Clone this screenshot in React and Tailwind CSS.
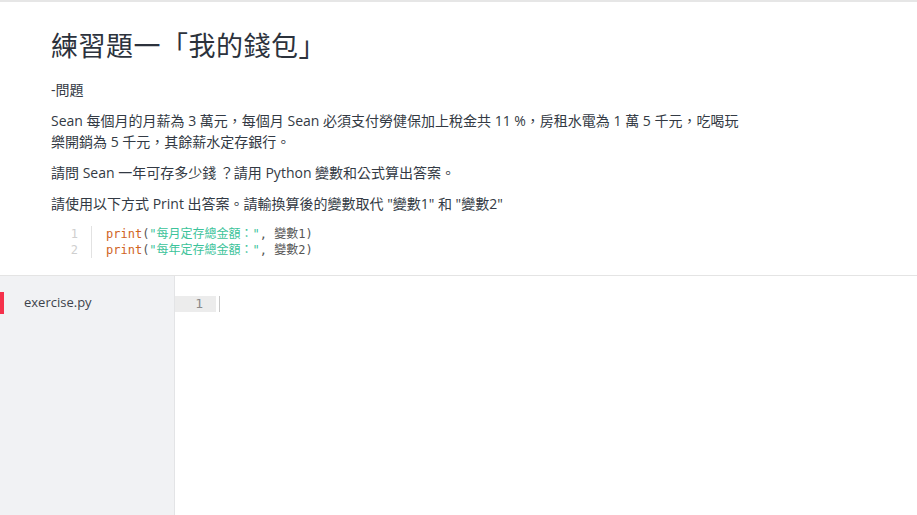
import React from 'react';

const codeLines = [
  ['每月定存總金額：', '變數1'],
  ['每年定存總金額：', '變數2'],
];

const App = () => {
  return (
    <div className="w-[917px] h-[515px] flex flex-col bg-white text-[#333a44] overflow-hidden font-['Open_Sans','Noto_Sans_CJK_TC',sans-serif]">
      {/* Problem description */}
      <div className="border-t-2 border-[#e6e6e6] border-b border-b-[#e4e4e4] pl-[51px] pr-6 pt-[25px] pb-[17px]">
        <h1 className="text-[27px] leading-[38px] font-normal text-[#2c323c] tracking-[0.5px]">練習題一「我的錢包」</h1>
        <p className="mt-[14px] text-[14px] leading-[21px]">-問題</p>
        <p className="mt-[10px] text-[14px] leading-[21px] w-[700px]">
          Sean 每個月的月薪為 3 萬元，每個月 Sean 必須支付勞健保加上稅金共 11 %，房租水電為 1 萬 5 千元，吃喝玩樂開銷為 5 千元，其餘薪水定存銀行。
        </p>
        <p className="mt-[10px] text-[14px] leading-[21px]">請問 Sean 一年可存多少錢 ？請用 Python 變數和公式算出答案。</p>
        <p className="mt-[10px] text-[14px] leading-[21px]">請使用以下方式 Print 出答案。請輸換算後的變數取代 "變數1" 和 "變數2"</p>

        {/* Code sample */}
        <div className="mt-[12px] flex text-[12px] leading-[16px] font-['DejaVu_Sans_Mono','Noto_Sans_CJK_TC',monospace]">
          <div className="w-[41px] pr-[13px] text-right text-[#cfcfcf] border-r border-[#e2e2e2]">
            <div>1</div>
            <div>2</div>
          </div>
          <div className="pl-[14px]">
            {codeLines.map(([s, v], i) => (
              <div key={i} className="whitespace-pre">
                <span className="text-[#d0641e]">print</span>
                <span className="text-[#555]">(</span>
                <span className="text-[#3cc39a]">"{s}"</span>
                <span className="text-[#555]">, {v})</span>
              </div>
            ))}
          </div>
        </div>
      </div>

      {/* Editor */}
      <div className="flex flex-1 min-h-0">
        <div className="w-[175px] shrink-0 bg-[#f1f2f4] border-r border-[#e3e4e6] pt-[16px]">
          <div className="relative h-[22px] flex items-center pl-[24px] text-[13px] text-[#3d434c]">
            <span className="absolute left-0 top-0 w-[4px] h-[22px] bg-[#f5314b]" />
            exercise.py
          </div>
        </div>
        <div className="flex-1 pt-[20px]">
          <div className="flex items-center h-[16px]">
            <div className="w-[41px] h-[16px] bg-[#ececec] text-[13px] leading-[16px] text-[#8a8a8a] text-right pr-[13px] font-['DejaVu_Sans_Mono',monospace]">1</div>
            <div className="ml-[3px] w-px h-[16px] bg-[#c8c8c8]" />
          </div>
        </div>
      </div>
    </div>
  );
};

export default App;
